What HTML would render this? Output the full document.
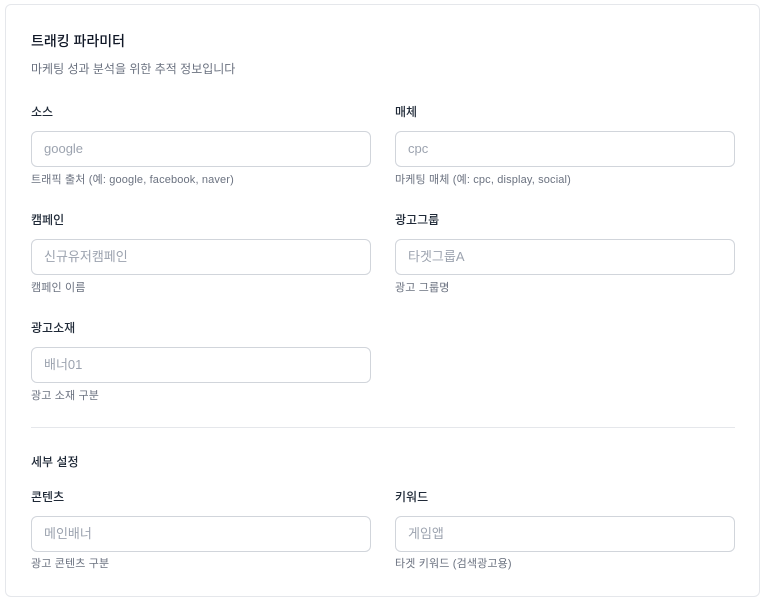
<!DOCTYPE html>
<html><head><meta charset="utf-8"><style>
*{box-sizing:border-box;margin:0;padding:0}
body{width:764px;height:601px;background:#fff;font-family:"Liberation Sans","Noto Sans CJK KR",sans-serif;position:relative;overflow:hidden}
.card{position:absolute;left:5px;top:4px;width:755px;height:593px;border:1px solid #e5e7eb;border-radius:6px;background:#fff}
.t{position:absolute;white-space:nowrap}
.h{font-size:14px;font-weight:500;color:#111827}
.s{font-size:12px;color:#6b7280}
.l{font-size:12px;font-weight:500;color:#1f2937}
.hp{font-size:11px;color:#6b7280;letter-spacing:0.15px}
.in{position:absolute;width:340px;height:36px;border:1px solid #d1d5db;border-radius:6px;font-size:13px;color:#9ca3af;padding-left:12px;line-height:34px}
.div{position:absolute;left:31px;top:427px;width:704px;height:1px;background:#e5e7eb}
</style></head><body>
<div class="card"></div>
<div class="t h" style="left:31px;top:31px">트래킹 파라미터</div>
<div class="t s" style="left:31px;top:60px">마케팅 성과 분석을 위한 추적 정보입니다</div>

<div class="t l" style="left:31px;top:103px">소스</div>
<div class="in" style="left:31px;top:131px">google</div>
<div class="t hp" style="left:31px;top:171px">트래픽 출처 (예: google, facebook, naver)</div>
<div class="t l" style="left:395px;top:103px">매체</div>
<div class="in" style="left:395px;top:131px">cpc</div>
<div class="t hp" style="left:395px;top:171px">마케팅 매체 (예: cpc, display, social)</div>

<div class="t l" style="left:31px;top:211px">캠페인</div>
<div class="in" style="left:31px;top:239px">신규유저캠페인</div>
<div class="t hp" style="left:31px;top:279px">캠페인 이름</div>
<div class="t l" style="left:395px;top:211px">광고그룹</div>
<div class="in" style="left:395px;top:239px">타겟그룹A</div>
<div class="t hp" style="left:395px;top:279px">광고 그룹명</div>

<div class="t l" style="left:31px;top:319px">광고소재</div>
<div class="in" style="left:31px;top:347px">배너01</div>
<div class="t hp" style="left:31px;top:387px">광고 소재 구분</div>

<div class="div"></div>
<div class="t" style="left:31px;top:453px;font-size:12px;font-weight:500;color:#1f2937">세부 설정</div>

<div class="t l" style="left:31px;top:488px">콘텐츠</div>
<div class="in" style="left:31px;top:516px">메인배너</div>
<div class="t hp" style="left:31px;top:555px">광고 콘텐츠 구분</div>
<div class="t l" style="left:395px;top:488px">키워드</div>
<div class="in" style="left:395px;top:516px">게임앱</div>
<div class="t hp" style="left:395px;top:555px">타겟 키워드 (검색광고용)</div>
</body></html>
